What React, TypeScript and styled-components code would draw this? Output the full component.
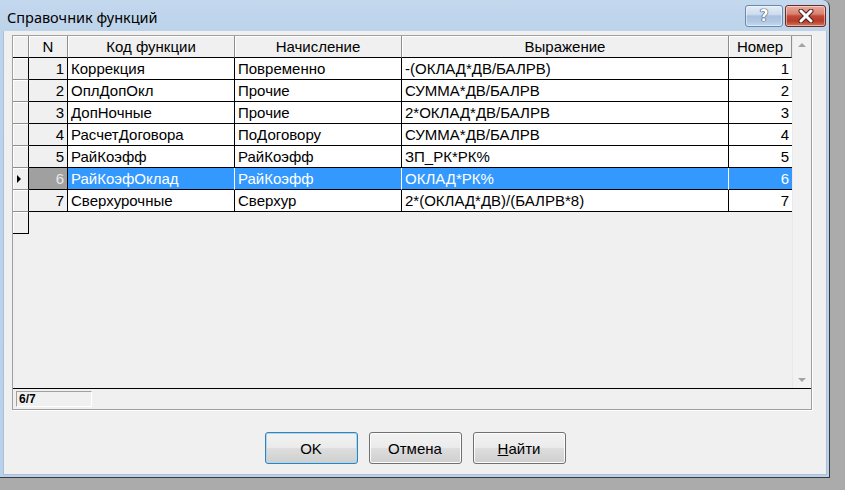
import React from "react";
import styled, { createGlobalStyle } from "styled-components";

const GlobalStyle = createGlobalStyle`
  html, body {
    margin: 0;
    padding: 0;
    width: 845px;
    height: 490px;
    overflow: hidden;
    background: #ababab;
  }
  body {
    font-family: "Liberation Sans", Arial, sans-serif;
  }
  * { box-sizing: border-box; }
`;

const Window = styled.div`
  width: 830px;
  height: 478px;
  display: flex;
  flex-direction: column;
  background: linear-gradient(180deg, #c4d8ee 0px, #bcd3ea 30px, #b9d1ea 100%);
  border-right: 1px solid #3a3a3a;
  border-bottom: 1px solid #3a3a3a;
  border-top-right-radius: 7px;
`;

const TitleBar = styled.div`
  height: 31px;
  display: flex;
  align-items: flex-start;
  padding: 0 3px 0 7px;
  flex: none;
`;

const TitleText = styled.div`
  padding-top: 7px;
  font-family: "Noto Sans", "Liberation Sans", sans-serif;
  font-size: 14.5px;
  line-height: 20px;
  color: #000;
`;

const CaptionButtons = styled.div`
  margin-left: auto;
  margin-top: 5px;
  display: flex;
  gap: 2px;
`;

const CaptionButton = styled.div<{ $kind: "help" | "close" }>`
  width: ${(p) => (p.$kind === "close" ? 41 : 38)}px;
  height: 22px;
  border-radius: 3px;
  border: 1px solid ${(p) => (p.$kind === "close" ? "#6a2b22" : "#6b88ad")};
  background: ${(p) =>
    p.$kind === "close"
      ? "linear-gradient(180deg, #e9a99b 0%, #d98270 40%, #c14a38 50%, #b93a2a 75%, #d0775d 100%)"
      : "linear-gradient(180deg, #e3edf7 0%, #cddcee 42%, #a9c1de 50%, #b2c9e4 80%, #c7d9ee 100%)"};
  box-shadow: inset 0 0 0 1px rgba(255, 255, 255, 0.45);
  display: flex;
  align-items: center;
  justify-content: center;
  color: #fff;
  font-family: "DejaVu Sans", sans-serif;
  font-weight: bold;
  font-size: 15px;
  text-shadow: 0 0 1px #33475f, 0 0 1px #33475f, 0 0 1px #33475f;
`;

const Client = styled.div`
  flex: 1;
  margin: 0 2px 2px 3px;
  background: #f0f0f0;
  border: 1px solid #a9c0da;
  border-top: none;
  display: flex;
  flex-direction: column;
  padding: 4px 14px 0 8px;
`;

const GridFrame = styled.div`
  width: 800px;
  height: 375px;
  border: 1px solid #a0a0a0;
  box-shadow: 1px 1px 0 #ffffff;
  display: flex;
  flex-direction: column;
  background: #f0f0f0;
`;

const GridBody = styled.div`
  flex: 1;
  display: flex;
  min-height: 0;
`;

const TableArea = styled.div`
  width: 779px;
  display: grid;
  grid-template-columns: 16px 39px 167px 167px 327px 63px;
  grid-auto-rows: 22px;
  align-content: start;
`;

const HeaderCell = styled.div`
  height: 22px;
  background: #f0f0f0;
  border-right: 1px solid #8e8e8e;
  border-bottom: 1px solid #000;
  box-shadow: inset 1px 1px 0 #ffffff;
  font-size: 15px;
  line-height: 21px;
  text-align: center;
  color: #000;
  white-space: nowrap;
  overflow: hidden;
`;

const Indicator = styled.div<{ $last?: boolean }>`
  background: #f0f0f0;
  border-right: 1px solid #000;
  border-bottom: 1px solid ${(p) => (p.$last ? "#000" : "#8e8e8e")};
  box-shadow: inset 1px 1px 0 #ffffff;
  display: flex;
  align-items: center;
  padding-left: 4px;
`;

const Arrow = styled.span`
  width: 0;
  height: 0;
  border-top: 4px solid transparent;
  border-bottom: 4px solid transparent;
  border-left: 4px solid #000;
`;

const Cell = styled.div<{ $align?: "left" | "right"; $sel?: boolean; $fixed?: boolean; $lastCol?: boolean }>`
  border-right: ${(p) => (p.$lastCol ? "none" : `1px solid ${p.$sel && !p.$fixed ? "#ffffff" : "#000"}`)};
  border-bottom: 1px solid #000;
  background: ${(p) => (p.$fixed ? (p.$sel ? "#a0a0a0" : "#f0f0f0") : p.$sel ? "#3399ff" : "#ffffff")};
  color: ${(p) => (p.$sel ? (p.$fixed ? "#e8e8e8" : "#ffffff") : "#000")};
  font-size: 15px;
  line-height: 21px;
  padding: 0 3px;
  text-align: ${(p) => p.$align ?? "left"};
  white-space: nowrap;
  overflow: hidden;
`;

const ScrollBar = styled.div`
  width: 19px;
  background: #f2f2f2;
  border-left: 1px solid #e8e8e8;
  display: flex;
  flex-direction: column;
  justify-content: space-between;
`;

const ScrollButton = styled.div<{ $dir: "up" | "down" }>`
  height: 17px;
  display: flex;
  align-items: center;
  justify-content: center;
  &::after {
    content: "";
    width: 0;
    height: 0;
    border-left: 4px solid transparent;
    border-right: 4px solid transparent;
    ${(p) => (p.$dir === "up" ? "border-bottom: 4px solid #a3a3a3;" : "border-top: 4px solid #a3a3a3;")}
  }
`;

const StatusBar = styled.div`
  height: 21px;
  border-top: 1px solid #000;
  padding: 2px 0 0 3px;
  flex: none;
`;

const StatusBox = styled.div`
  width: 76px;
  height: 16px;
  border-top: 1px solid #a0a0a0;
  border-left: 1px solid #a0a0a0;
  border-right: 1px solid #ffffff;
  border-bottom: 1px solid #ffffff;
  font-size: 12px;
  font-weight: bold;
  line-height: 14px;
  padding-left: 2px;
  color: #000;
`;

const ButtonRow = styled.div`
  margin-top: 22px;
  display: flex;
  justify-content: center;
  gap: 11px;
  padding-left: 6px;
`;

const Button = styled.div<{ $default?: boolean }>`
  width: 93px;
  height: 32px;
  border-radius: 3px;
  border: 1px solid ${(p) => (p.$default ? "#3c7fb1" : "#707070")};
  background: linear-gradient(180deg, #f2f2f2 0%, #ebebeb 48%, #dddddd 52%, #cfcfcf 100%);
  box-shadow: inset 0 0 0 1px ${(p) => (p.$default ? "#a7d8f5" : "#fcfcfc")};
  display: flex;
  align-items: center;
  justify-content: center;
  font-size: 15px;
  color: #000;
`;

const Mnemonic = styled.span`
  text-decoration: underline;
`;

type Row = { n: number; code: string; nach: string; expr: string; num: number };

const rows: Row[] = [
  { n: 1, code: "Коррекция", nach: "Повременно", expr: "-(ОКЛАД*ДВ/БАЛРВ)", num: 1 },
  { n: 2, code: "ОплДопОкл", nach: "Прочие", expr: "СУММА*ДВ/БАЛРВ", num: 2 },
  { n: 3, code: "ДопНочные", nach: "Прочие", expr: "2*ОКЛАД*ДВ/БАЛРВ", num: 3 },
  { n: 4, code: "РасчетДоговора", nach: "ПоДоговору", expr: "СУММА*ДВ/БАЛРВ", num: 4 },
  { n: 5, code: "РайКоэфф", nach: "РайКоэфф", expr: "ЗП_РК*РК%", num: 5 },
  { n: 6, code: "РайКоэфОклад", nach: "РайКоэфф", expr: "ОКЛАД*РК%", num: 6 },
  { n: 7, code: "Сверхурочные", nach: "Сверхур", expr: "2*(ОКЛАД*ДВ)/(БАЛРВ*8)", num: 7 },
];

const SELECTED = 6;

export default function App() {
  return (
    <>
      <GlobalStyle />
      <Window>
        <TitleBar>
          <TitleText>Справочник функций</TitleText>
          <CaptionButtons>
            <CaptionButton $kind="help">?</CaptionButton>
            <CaptionButton $kind="close">
              <svg width="16" height="14" viewBox="0 0 16 14">
                <path d="M3 2 L13 12 M13 2 L3 12" stroke="#4a2018" strokeWidth="5" strokeLinecap="round" />
                <path d="M3 2 L13 12 M13 2 L3 12" stroke="#ffffff" strokeWidth="3" strokeLinecap="round" />
              </svg>
            </CaptionButton>
          </CaptionButtons>
        </TitleBar>
        <Client>
          <GridFrame>
            <GridBody>
              <TableArea>
                <HeaderCell />
                <HeaderCell>N</HeaderCell>
                <HeaderCell>Код функции</HeaderCell>
                <HeaderCell>Начисление</HeaderCell>
                <HeaderCell>Выражение</HeaderCell>
                <HeaderCell>Номер</HeaderCell>
                {rows.map((r) => {
                  const sel = r.n === SELECTED;
                  return (
                    <React.Fragment key={r.n}>
                      <Indicator>{sel && <Arrow />}</Indicator>
                      <Cell $fixed $sel={sel} $align="right">
                        {r.n}
                      </Cell>
                      <Cell $sel={sel}>{r.code}</Cell>
                      <Cell $sel={sel}>{r.nach}</Cell>
                      <Cell $sel={sel}>{r.expr}</Cell>
                      <Cell $sel={sel} $align="right" $lastCol>
                        {r.num}
                      </Cell>
                    </React.Fragment>
                  );
                })}
                <Indicator $last />
              </TableArea>
              <ScrollBar>
                <ScrollButton $dir="up" />
                <ScrollButton $dir="down" />
              </ScrollBar>
            </GridBody>
            <StatusBar>
              <StatusBox>6/7</StatusBox>
            </StatusBar>
          </GridFrame>
          <ButtonRow>
            <Button $default>OK</Button>
            <Button>Отмена</Button>
            <Button>
              <Mnemonic>Н</Mnemonic>айти
            </Button>
          </ButtonRow>
        </Client>
      </Window>
    </>
  );
}
